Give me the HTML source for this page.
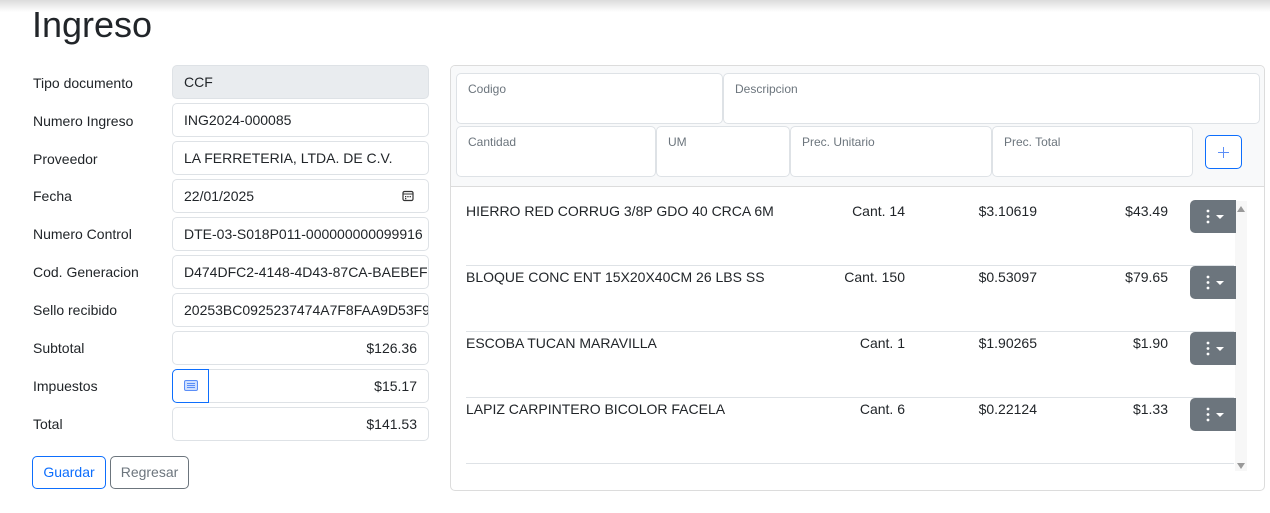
<!DOCTYPE html>
<html><head><meta charset="utf-8"><style>
body{margin:0;width:1270px;height:513px;background:#fff;font-family:"Liberation Sans",sans-serif;color:#212529;position:relative;overflow:hidden;font-size:14px}
.a{position:absolute}
.shadow{left:0;top:0;width:1270px;height:12px;background:linear-gradient(#dcdcdc,#fff)}
h1{position:absolute;left:32px;top:4px;margin:0;font-weight:400;font-size:36px}
.lbl{left:33px;font-size:14px}
.inp{left:172px;height:32px;border:1px solid #dee2e6;border-radius:5px;box-sizing:content-box;line-height:32px;padding:0 11px 0 11px;width:233px;overflow:hidden;white-space:nowrap;font-size:14px;background-clip:padding-box}
.r{text-align:right}
.btn{border-radius:5px;height:31px;line-height:31px;text-align:center;font-size:14px}
.card{left:450px;top:65px;width:813px;height:424px;border:1px solid #dcdcdc;border-radius:5px;overflow:hidden}
.hd{left:0;top:0;width:813px;height:120px;background:#f8f9fa;border-bottom:1px solid #dcdcdc}
.f{background:#fff;border:1px solid #dee2e6;border-radius:5px;height:51px;font-size:12px;color:#6c757d;box-sizing:border-box;padding:8px 0 0 11px}
.it{font-size:14px}
.dd{width:46px;height:33px;background:#6c757d;border-radius:5px 0 0 5px;color:#fff}
.line{left:15px;width:768px;height:1px;background:#dee2e6}
</style></head><body>
<div class="a shadow"></div>
<h1>Ingreso</h1>
<div class="a lbl" style="top:75px">Tipo documento</div>
<div class="a lbl" style="top:113px">Numero Ingreso</div>
<div class="a lbl" style="top:151px">Proveedor</div>
<div class="a lbl" style="top:188px">Fecha</div>
<div class="a lbl" style="top:226px">Numero Control</div>
<div class="a lbl" style="top:264px">Cod. Generacion</div>
<div class="a lbl" style="top:302px">Sello recibido</div>
<div class="a lbl" style="top:340px">Subtotal</div>
<div class="a lbl" style="top:378px">Impuestos</div>
<div class="a lbl" style="top:416px">Total</div>
<div class="a inp" style="top:65px;background:#e9ecef">CCF</div>
<div class="a inp" style="top:103px">ING2024-000085</div>
<div class="a inp" style="top:141px">LA FERRETERIA, LTDA. DE C.V.</div>
<div class="a inp" style="top:179px">22/01/2025<svg class="a" style="left:229px;top:10px" width="12" height="12" viewBox="0 0 12 12"><rect x="1" y="1.5" width="10" height="9" rx="1.5" fill="none" stroke="#333" stroke-width="1.2"/><line x1="1" y1="4" x2="11" y2="4" stroke="#333"/><rect x="3" y="6" width="1.3" height="1.3" fill="#333"/><rect x="5.3" y="6" width="1.3" height="1.3" fill="#333"/><rect x="7.6" y="6" width="1.3" height="1.3" fill="#333"/><rect x="3" y="8" width="1.3" height="1.3" fill="#333"/></svg></div>
<div class="a inp" style="top:217px">DTE-03-S018P011-000000000099916</div>
<div class="a inp" style="top:255px">D474DFC2-4148-4D43-87CA-BAEBEF</div>
<div class="a inp" style="top:293px">20253BC0925237474A7F8FAA9D53F9</div>
<div class="a inp r" style="top:331px">$126.36</div>
<div class="a inp r" style="top:369px">$15.17</div>
<div class="a inp r" style="top:407px">$141.53</div>
<div class="a" style="left:172px;top:369px;width:35px;height:32px;border:1px solid #0d6efd;border-radius:5px 0 0 5px;background:#fff"><svg class="a" style="left:11px;top:10px" width="14" height="12" viewBox="0 0 14 12"><rect x="0.5" y="0.5" width="13" height="10" rx="1.5" fill="#cfe0ff" stroke="#5b8ef7"/><line x1="3" y1="3.5" x2="11" y2="3.5" stroke="#5b8ef7"/><line x1="3" y1="5.5" x2="11" y2="5.5" stroke="#5b8ef7"/><line x1="3" y1="7.5" x2="11" y2="7.5" stroke="#5b8ef7"/></svg></div>
<div class="a btn" style="left:32px;top:456px;width:72px;border:1px solid #0d6efd;color:#0d6efd">Guardar</div>
<div class="a btn" style="left:110px;top:456px;width:77px;border:1px solid #6c757d;color:#6c757d">Regresar</div>
<div class="a card">
<div class="a hd"></div>
<div class="a f" style="left:5px;top:7px;width:267px">Codigo</div>
<div class="a f" style="left:272px;top:7px;width:537px">Descripcion</div>
<div class="a f" style="left:5px;top:60px;width:200px">Cantidad</div>
<div class="a f" style="left:205px;top:60px;width:134px">UM</div>
<div class="a f" style="left:339px;top:60px;width:202px">Prec. Unitario</div>
<div class="a f" style="left:541px;top:60px;width:201px">Prec. Total</div>
<div class="a" style="left:754px;top:69px;width:35px;height:32px;border:1px solid #0d6efd;border-radius:5px;background:#fff"><svg class="a" style="left:11px;top:10px" width="13" height="13"><path d="M6.5 1v11M1 6.5h11" stroke="#5b8ef7" stroke-width="1"/></svg></div>
<div class="a" style="left:784px;top:135px;width:12px;height:270px;background:#f7f7f7"></div>
<div class="a" style="left:786px;top:140px;width:0;height:0;border:4px solid transparent;border-bottom:6px solid #999;border-top:0"></div>
<div class="a" style="left:786px;top:397px;width:0;height:0;border:4px solid transparent;border-top:6px solid #999;border-bottom:0"></div>
<div class="a line" style="top:199px"></div>
<div class="a line" style="top:265px"></div>
<div class="a line" style="top:331px"></div>
<div class="a line" style="top:397px"></div>
</div>
<div class="a it" style="left:466px;top:203px">HIERRO RED CORRUG 3/8P GDO 40 CRCA 6M</div>
<div class="a it" style="left:805px;width:100px;text-align:right;top:203px">Cant. 14</div>
<div class="a it" style="left:937px;width:100px;text-align:right;top:203px">$3.10619</div>
<div class="a it" style="left:1068px;width:100px;text-align:right;top:203px">$43.49</div>
<div class="a it" style="left:466px;top:269px">BLOQUE CONC ENT 15X20X40CM 26 LBS SS</div>
<div class="a it" style="left:805px;width:100px;text-align:right;top:269px">Cant. 150</div>
<div class="a it" style="left:937px;width:100px;text-align:right;top:269px">$0.53097</div>
<div class="a it" style="left:1068px;width:100px;text-align:right;top:269px">$79.65</div>
<div class="a it" style="left:466px;top:335px">ESCOBA TUCAN MARAVILLA</div>
<div class="a it" style="left:805px;width:100px;text-align:right;top:335px">Cant. 1</div>
<div class="a it" style="left:937px;width:100px;text-align:right;top:335px">$1.90265</div>
<div class="a it" style="left:1068px;width:100px;text-align:right;top:335px">$1.90</div>
<div class="a it" style="left:466px;top:401px">LAPIZ CARPINTERO BICOLOR FACELA</div>
<div class="a it" style="left:805px;width:100px;text-align:right;top:401px">Cant. 6</div>
<div class="a it" style="left:937px;width:100px;text-align:right;top:401px">$0.22124</div>
<div class="a it" style="left:1068px;width:100px;text-align:right;top:401px">$1.33</div>
<div class="a dd" style="left:1190px;top:200px"><svg width="46" height="33"><circle cx="18" cy="11" r="1.4" fill="#fff"/><circle cx="18" cy="16.5" r="1.4" fill="#fff"/><circle cx="18" cy="22" r="1.4" fill="#fff"/><path d="M26 15h8l-4 4z" fill="#fff"/></svg></div>
<div class="a dd" style="left:1190px;top:266px"><svg width="46" height="33"><circle cx="18" cy="11" r="1.4" fill="#fff"/><circle cx="18" cy="16.5" r="1.4" fill="#fff"/><circle cx="18" cy="22" r="1.4" fill="#fff"/><path d="M26 15h8l-4 4z" fill="#fff"/></svg></div>
<div class="a dd" style="left:1190px;top:332px"><svg width="46" height="33"><circle cx="18" cy="11" r="1.4" fill="#fff"/><circle cx="18" cy="16.5" r="1.4" fill="#fff"/><circle cx="18" cy="22" r="1.4" fill="#fff"/><path d="M26 15h8l-4 4z" fill="#fff"/></svg></div>
<div class="a dd" style="left:1190px;top:398px"><svg width="46" height="33"><circle cx="18" cy="11" r="1.4" fill="#fff"/><circle cx="18" cy="16.5" r="1.4" fill="#fff"/><circle cx="18" cy="22" r="1.4" fill="#fff"/><path d="M26 15h8l-4 4z" fill="#fff"/></svg></div>
</body></html>
